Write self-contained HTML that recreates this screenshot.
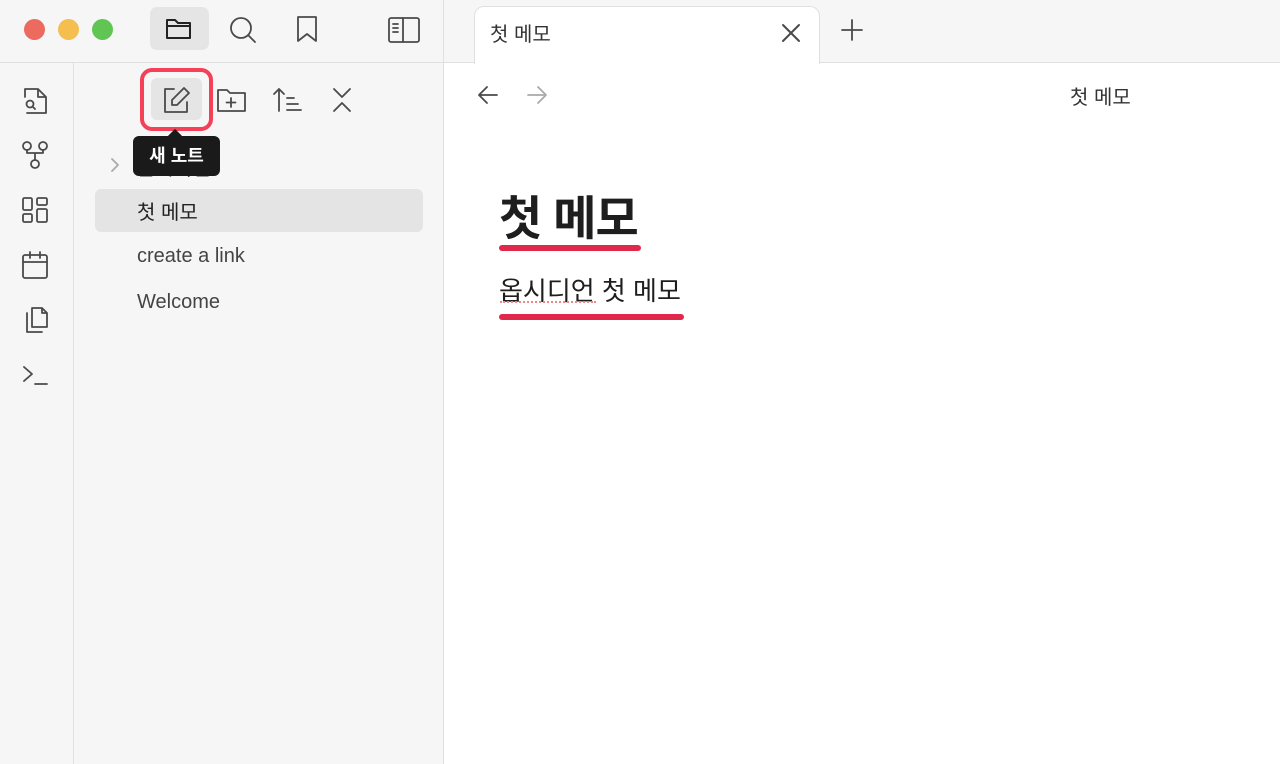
<!DOCTYPE html>
<html><head><meta charset="utf-8"><style>
*{margin:0;padding:0;box-sizing:border-box}
body{width:1280px;height:764px;overflow:hidden;background:#fff;font-family:"Liberation Sans","Noto Sans CJK KR",sans-serif;position:relative}
.abs{position:absolute}
svg{position:absolute;fill:none;stroke:#4a4a4a;stroke-width:1.8;stroke-linecap:round;stroke-linejoin:round}
</style></head><body>
<div class="abs" style="left:0;top:0;width:443px;height:764px;background:#f6f6f6"></div>
<div class="abs" style="left:0;top:62px;width:443px;height:1px;background:#e0e0e0"></div>
<div class="abs" style="left:73px;top:63px;width:1px;height:701px;background:#e0e0e0"></div>
<div class="abs" style="left:443px;top:0;width:1px;height:764px;background:#e0e0e0"></div>
<div class="abs" style="left:444px;top:0;width:836px;height:62px;background:#f6f6f6"></div>
<div class="abs" style="left:444px;top:62px;width:836px;height:1px;background:#e0e0e0"></div>
<div class="abs" style="left:474px;top:6px;width:346px;height:58px;background:#fff;border:1px solid #e0e0e0;border-bottom:none;border-radius:10px 10px 0 0"></div>
<div class="abs" style="left:490px;top:18px;font-size:20px;color:#333">첫 메모</div>
<svg style="left:780px;top:22px" width="22" height="22"><path d="M3 3L19 19M19 3L3 19" stroke-width="2"/></svg>
<svg style="left:840px;top:18px" width="24" height="24"><path d="M12 2V22M2 12H22"/></svg>
<div class="abs" style="left:24px;top:19px;width:21px;height:21px;border-radius:50%;background:#ec6a5e"></div>
<div class="abs" style="left:58px;top:19px;width:21px;height:21px;border-radius:50%;background:#f4bf4f"></div>
<div class="abs" style="left:92px;top:19px;width:21px;height:21px;border-radius:50%;background:#61c554"></div>
<div class="abs" style="left:150px;top:7px;width:59px;height:43px;background:#e5e5e5;border-radius:7px"></div>
<svg style="left:164px;top:16px" width="30" height="26"><path d="M3 4h8l3 3h12v15H3z M3 10H26" stroke="#222" stroke-width="2"/></svg>
<svg style="left:228px;top:15px" width="30" height="30"><circle cx="13" cy="13" r="10"/><path d="M20.5 20.5L27 27"/></svg>
<svg style="left:294px;top:15px" width="26" height="28"><path d="M4 2H22V26L13 19L4 26Z"/></svg>
<svg style="left:386px;top:15px" width="36" height="30"><rect x="3" y="3" width="30" height="24" rx="2"/><path d="M17 3V27M7 9H12M7 13H12M7 17H12"/></svg>
<svg style="left:20px;top:85px" width="30" height="30"><path d="M5 12V4H18L26 12V28H7 M18 4V12H26"/><circle cx="10" cy="19" r="3.5"/><path d="M12.5 21.5L15 24"/></svg>
<svg style="left:20px;top:140px" width="30" height="30"><circle cx="7" cy="6" r="4"/><circle cx="23" cy="6" r="4"/><circle cx="15" cy="24" r="4"/><path d="M7 10V13H23V10M15 13V20"/></svg>
<svg style="left:20px;top:195px" width="30" height="30"><rect x="3" y="3" width="9" height="12" rx="1.5"/><rect x="17" y="3" width="10" height="7" rx="1.5"/><rect x="3" y="19" width="9" height="8" rx="1.5"/><rect x="17" y="14" width="10" height="13" rx="1.5"/></svg>
<svg style="left:20px;top:250px" width="30" height="30"><rect x="3" y="5" width="24" height="23" rx="2"/><path d="M3 12H27M10 2V8M20 2V8"/></svg>
<svg style="left:20px;top:305px" width="30" height="30"><path d="M12 3H22L27 8V22H12Z M22 3V8H27 M7 8V27H22"/></svg>
<svg style="left:20px;top:362px" width="30" height="26"><path d="M4 5L12 12L4 19M15 22H27"/></svg>
<div class="abs" style="left:140px;top:68px;width:73px;height:63px;border:4px solid #f54057;border-radius:12px"></div>
<div class="abs" style="left:151px;top:78px;width:51px;height:42px;background:#e5e5e5;border-radius:6px"></div>
<svg style="left:161px;top:85px" width="30" height="30"><path d="M13 4H4V27H26V17 M23 3L28 8L16 20H11V15Z"/></svg>
<svg style="left:216px;top:86px" width="32" height="28"><path d="M2 4h9l3 3h15v18H2z M15 12V21M10.5 16.5H19.5"/></svg>
<svg style="left:272px;top:86px" width="32" height="28"><path d="M7 25V3L2 8M7 3L12 8 M15 12H22M15 18H26M15 24H29"/></svg>
<svg style="left:328px;top:86px" width="28" height="28"><path d="M6 3L14 11L22 3M6 25L14 17L22 25"/></svg>
<svg style="left:108px;top:156px" width="14" height="18" ><path d="M4 3L10 9L4 15" stroke="#aaa"/></svg>
<div class="abs" style="left:137px;top:152px;font-size:20px;color:#333">옵시디언</div>
<div class="abs" style="left:95px;top:189px;width:328px;height:43px;background:#e4e4e4;border-radius:6px"></div>
<div class="abs" style="left:137px;top:196px;font-size:20px;color:#222">첫 메모</div>
<div class="abs" style="left:137px;top:245px;font-size:20px;color:#444">create a link</div>
<div class="abs" style="left:137px;top:291px;font-size:20px;color:#444">Welcome</div>
<div class="abs" style="left:170px;top:131px;width:10px;height:10px;background:#1a1a1a;transform:rotate(45deg)"></div>
<div class="abs" style="left:133px;top:136px;width:87px;height:40px;background:#1a1a1a;border-radius:6px;color:#fff;font-size:18px;font-weight:bold;text-align:center;line-height:40px">새 노트</div>
<svg style="left:476px;top:84px" width="24" height="22"><path d="M21 11H3M11 3L3 11L11 19"/></svg>
<svg style="left:525px;top:84px" width="24" height="22"><path d="M3 11H21M13 3L21 11L13 19" stroke="#aaa"/></svg>
<div class="abs" style="left:1070px;top:81px;font-size:20px;color:#333">첫 메모</div>
<div class="abs" style="left:499px;top:180px;font-size:47px;font-weight:bold;color:#1e1e1e;letter-spacing:-1px">첫 메모</div>
<div class="abs" style="left:499px;top:245px;width:142px;height:6px;background:#e0284a;border-radius:3px"></div>
<div class="abs" style="left:499px;top:271px;font-size:26px;color:#1e1e1e">옵시디언 첫 메모</div>
<div class="abs" style="left:500px;top:301px;width:96px;height:0;border-top:2px dotted #e88"></div>
<div class="abs" style="left:499px;top:314px;width:185px;height:6px;background:#e0284a;border-radius:3px"></div>
</body></html>
